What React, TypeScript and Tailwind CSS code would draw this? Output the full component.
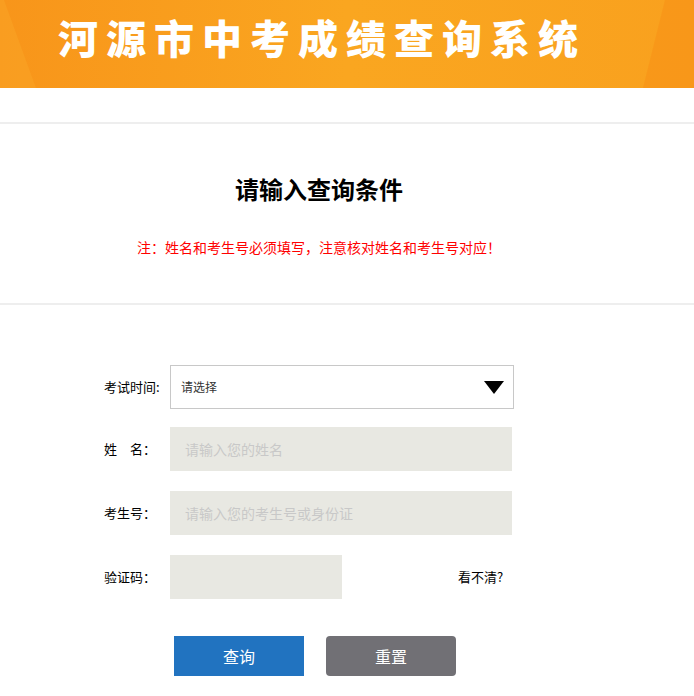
export default function App() {
  const font = 'font-["Microsoft_YaHei","Noto_Sans_CJK_SC",sans-serif]';
  return (
    <div className={`w-[694px] bg-white ${font} [text-spacing-trim:space-all]`}>
      {/* 顶部横幅 */}
      <div className="relative h-[88px] overflow-hidden bg-gradient-to-r from-[#f8951a] via-[#faa620] to-[#f9a11e]">
        <div className="absolute -left-[40px] top-0 h-full w-[60px] skew-x-[20deg] bg-[#fbab2a]/40" />
        <div className="absolute right-[-30px] top-0 h-full w-[70px] -skew-x-[14deg] bg-[#f78a12]/40" />
        <div className="relative flex h-full items-start pl-[58px] pt-[14px]">
          <span className="text-[40px] font-black leading-[46px] tracking-[8px] text-white">河源市中考成绩查询系统</span>
        </div>
      </div>

      <div className="h-[34px]" />
      <div className="h-[2px] bg-[#eeeeee]" />

      {/* 标题 */}
      <div className="flex w-[638px] flex-col items-center">
        <h1 className="mt-[50px] text-[24px] font-bold leading-[30px] text-black">请输入查询条件</h1>
        <p className="mt-[34px] text-[14px] leading-[18px] text-[#ff0000]">注：姓名和考生号必须填写，注意核对姓名和考生号对应！</p>
      </div>
      <div className="mt-[47px] h-[2px] bg-[#eeeeee]" />

      {/* 表单 */}
      <div className="ml-[104px] mt-[60px] flex flex-col">
        <div className="flex items-center">
          <label className="w-[66px] text-[13px] text-black">考试时间:</label>
          <div className="flex h-[44px] w-[344px] items-center justify-between border border-[#c8c8c8] pl-[10px] pr-[9px]">
            <span className="text-[12px] text-[#333]">请选择</span>
            <svg width="20" height="13" viewBox="0 0 20 13">
              <polygon points="0,0 20,0 10,13" fill="#000" />
            </svg>
          </div>
        </div>

        <div className="mt-[18px] flex items-center">
          <label className="w-[66px] text-[13px] text-black">姓&emsp;名：</label>
          <input className="h-[44px] w-[342px] bg-[#e8e8e2] px-[15px] text-[14px] outline-none placeholder:text-[#c8c8c8]" placeholder="请输入您的姓名" />
        </div>

        <div className="mt-[20px] flex items-center">
          <label className="w-[66px] text-[13px] text-black">考生号：</label>
          <input className="h-[44px] w-[342px] bg-[#e8e8e2] px-[15px] text-[14px] outline-none placeholder:text-[#c8c8c8]" placeholder="请输入您的考生号或身份证" />
        </div>

        <div className="mt-[20px] flex items-center">
          <label className="w-[66px] text-[13px] text-black">验证码：</label>
          <input className="h-[44px] w-[172px] bg-[#e8e8e2] px-[15px] text-[14px] outline-none" />
          <span className="ml-[116px] text-[13px] text-black">看不清?</span>
        </div>

        <div className="ml-[70px] mt-[37px] flex gap-[22px]">
          <button className="h-[40px] w-[130px] bg-[#2173c0] text-[16px] text-white">查询</button>
          <button className="h-[40px] w-[130px] rounded-[4px] bg-[#717075] text-[16px] text-white">重置</button>
        </div>
      </div>
    </div>
  );
}
